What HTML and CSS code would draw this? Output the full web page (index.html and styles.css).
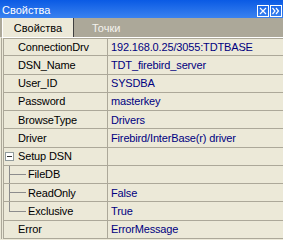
FILE: index.html
```html
<!DOCTYPE html>
<html lang="ru">
<head>
    <meta charset="UTF-8">
    <title>Свойства</title>
    <link rel="stylesheet" href="styles.css">
</head>
<body>
    <div class="panel">
        <div class="titlebar">
            <span class="title">Свойства</span>
            <div class="title-buttons">
                <svg width="12" height="12" viewBox="0 0 12 12">
                    <rect x="0.5" y="0.5" width="11" height="11" fill="none" stroke="#fff"/>
                    <path d="M3 3L9 9M9 3L3 9" stroke="#fff" stroke-width="1.2"/>
                </svg>
                <svg width="12" height="12" viewBox="0 0 12 12">
                    <rect x="0.5" y="0.5" width="11" height="11" fill="none" stroke="#fff"/>
                    <path d="M2.5 3L5 6L2.5 9M6 3L8.5 6L6 9" fill="none" stroke="#fff" stroke-width="1.2"/>
                </svg>
            </div>
        </div>
        <div class="tabs">
            <div class="tab active">Свойства</div>
            <div class="tab">Точки</div>
        </div>
        <div class="grid">
            <div class="row selected"><div class="name">ConnectionDrv</div><div class="value">192.168.0.25/3055:TDTBASE</div></div>
            <div class="row"><div class="name">DSN_Name</div><div class="value">TDT_firebird_server</div></div>
            <div class="row"><div class="name">User_ID</div><div class="value">SYSDBA</div></div>
            <div class="row"><div class="name">Password</div><div class="value">masterkey</div></div>
            <div class="row"><div class="name">BrowseType</div><div class="value">Drivers</div></div>
            <div class="row"><div class="name">Driver</div><div class="value">Firebird/InterBase(r) driver</div></div>
            <div class="row"><div class="name group"><span class="expander"></span>Setup DSN</div><div class="value"></div></div>
            <div class="row"><div class="name child">FileDB</div><div class="value"></div></div>
            <div class="row"><div class="name child">ReadOnly</div><div class="value">False</div></div>
            <div class="row"><div class="name child last">Exclusive</div><div class="value">True</div></div>
            <div class="row"><div class="name">Error</div><div class="value">ErrorMessage</div></div>
        </div>
    </div>
</body>
</html>
```

FILE: styles.css
```css
body {
    margin: 0;
    background: #ece9d8;
    font-family: "Liberation Sans", Arial, sans-serif;
    font-size: 11px;
}
.panel {
    width: 283px;
    height: 240px;
    overflow: hidden;
}
.titlebar {
    height: 18px;
    box-sizing: border-box;
    padding: 0 1px 1px 2px;
    display: flex;
    align-items: flex-end;
    justify-content: space-between;
    background: linear-gradient(#0a5ae4, #3a82f0);
    color: #fff;
}
.title {
    line-height: 13px;
}
.title-buttons {
    display: flex;
    gap: 1px;
}
.title-buttons svg {
    display: block;
}
.tabs {
    display: flex;
    height: 19px;
    background: #aca899;
    padding-left: 2px;
}
.tab {
    display: flex;
    align-items: center;
    padding-left: 18px;
    color: #f4f3ee;
}
.tab.active {
    width: 72px;
    box-sizing: border-box;
    padding-left: 0;
    justify-content: center;
    background: #ece9d8;
    color: #000;
    border-left: 1px solid #fff;
    border-right: 1px solid #404040;
}
.grid {
    margin-left: 1px;
    border-left: 1px solid #aca899;
    padding-left: 1px;
    border-top: 1px solid #fff;
    letter-spacing: -0.15px;
}
.row {
    display: grid;
    grid-template-columns: 104px 1fr;
    height: 18.27px;
    box-sizing: border-box;
    border-left: 1px solid #aca899;
    border-bottom: 1px solid #aca899;
}
.row:first-child {
    border-top: 1px solid #aca899;
}
.name {
    display: flex;
    align-items: center;
    padding-left: 14px;
    border-right: 1px solid #aca899;
    color: #000;
}
.value {
    display: flex;
    align-items: center;
    padding-left: 3px;
    color: #000080;
    white-space: nowrap;
    overflow: hidden;
}
.name.group {
    padding-left: 1px;
}
.expander {
    width: 9px;
    height: 9px;
    box-sizing: border-box;
    margin-right: 4px;
    border: 1px solid #919b9c;
    background: linear-gradient(#333, #333) no-repeat 1px 3px / 5px 1px, #fff;
}
.name.child {
    padding-left: 24px;
    background:
        linear-gradient(#8c8c8c, #8c8c8c) no-repeat 5px 0 / 1px 100%,
        linear-gradient(#8c8c8c, #8c8c8c) no-repeat 5px 50% / 17px 1px;
}
.name.child.last {
    background:
        linear-gradient(#8c8c8c, #8c8c8c) no-repeat 5px 0 / 1px 50%,
        linear-gradient(#8c8c8c, #8c8c8c) no-repeat 5px 50% / 17px 1px;
}
```
